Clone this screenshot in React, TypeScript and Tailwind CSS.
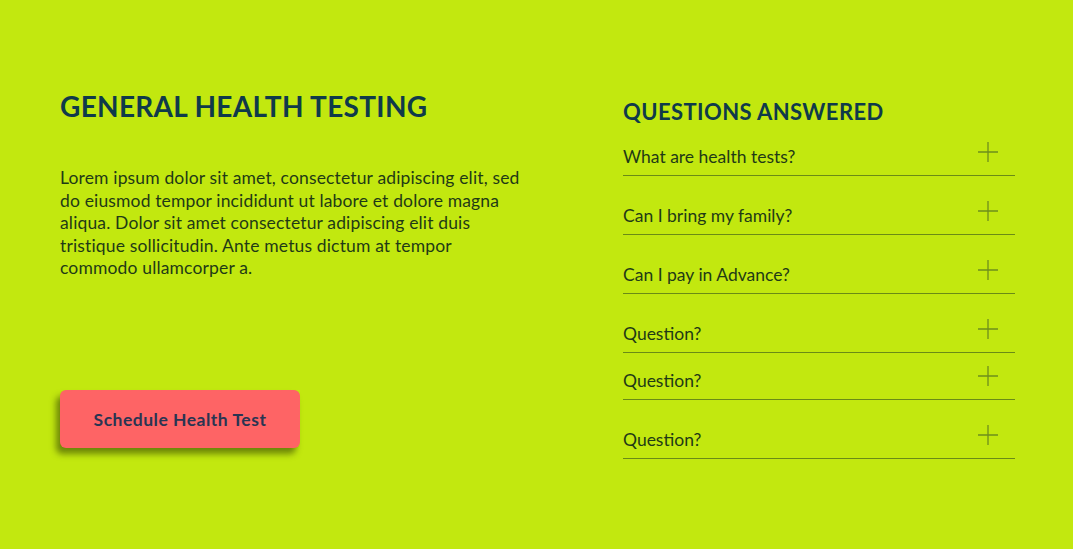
import React from "react";

const questions = [
  { q: "What are health tests?", h: "h-[49px]" },
  { q: "Can I bring my family?", h: "h-[59px]" },
  { q: "Can I pay in Advance?", h: "h-[59px]" },
  { q: "Question?", h: "h-[59px]" },
  { q: "Question?", h: "h-[47px]" },
  { q: "Question?", h: "h-[59px]" },
];

function Plus() {
  return (
    <svg width="22" height="22" viewBox="0 0 22 22" className="shrink-0">
      <path d="M11 1V21M1 11H21" stroke="#6e8f1c" strokeWidth="1.3" fill="none" />
    </svg>
  );
}

export default function App() {
  return (
    <div
      className="w-[1073px] h-[549px] bg-[#c2e80f] flex overflow-hidden"
      style={{ fontFamily: "Lato, 'Open Sans', sans-serif" }}
    >
      <div className="w-[563px] pl-[60px] pt-[88px] flex flex-col">
        <h1 className="text-[28px] leading-[36px] font-bold tracking-[0.3px] text-[#0f3a4a]">
          GENERAL HEALTH TESTING
        </h1>
        <p className="mt-[43px] w-[470px] text-[17.5px] leading-[22.5px] tracking-[0.15px] text-[#1f3a16]">
          Lorem ipsum dolor sit amet, consectetur adipiscing elit, sed do eiusmod tempor incididunt ut labore et dolore magna aliqua. Dolor sit amet consectetur adipiscing elit duis tristique sollicitudin. Ante metus dictum at tempor commodo ullamcorper a.
        </p>
        <button className="mt-[110px] w-[240px] h-[58px] pt-[4px] rounded-[6px] bg-[#fe6465] text-[#2a3552] text-[17.5px] font-bold tracking-[0.5px] shadow-[-4px_6px_6px_rgba(40,55,0,0.55)]">
          Schedule Health Test
        </button>
      </div>
      <div className="w-[392px] ml-[60px] pt-[97px] flex flex-col">
        <h2 className="text-[22px] leading-[30px] font-bold tracking-[0.4px] text-[#0f3a4a]">
          QUESTIONS ANSWERED
        </h2>
        {questions.map((item, i) => (
          <div
            key={i}
            className={`${item.h} flex items-end justify-between border-b-[1.5px] border-[#6a8b16]`}
          >
            <span className="text-[17.5px] leading-[20px] mb-[8px] text-[#1f3a16]">{item.q}</span>
            <span className="mb-[12px] mr-[16px]">
              <Plus />
            </span>
          </div>
        ))}
      </div>
    </div>
  );
}
